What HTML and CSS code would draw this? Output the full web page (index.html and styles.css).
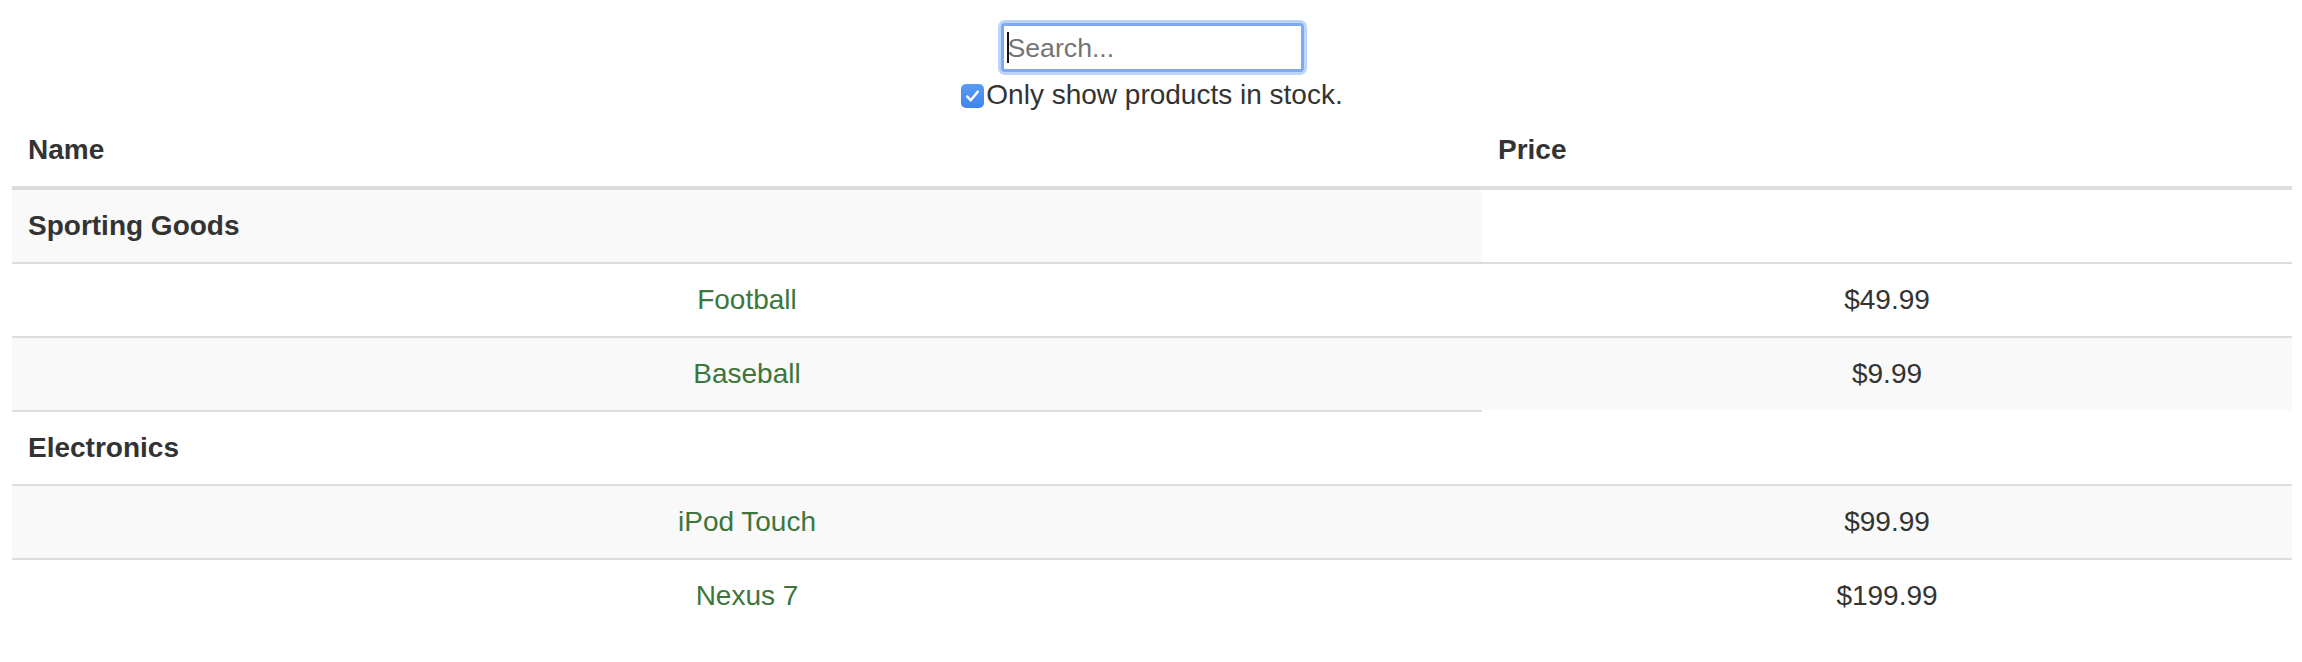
FILE: index.html
```html
<!DOCTYPE html>
<html>
<head>
<meta charset="utf-8">
<link rel="stylesheet" href="styles.css">
</head>
<body>
<div class="page">
  <form class="search-bar">
    <div class="search-row">
      <span class="search-wrap">
        <input class="search-input" type="text" placeholder="Search...">
        <span class="caret"></span>
      </span>
    </div>
    <div class="stock-row">
      <label class="stock-label">
        <span class="checkbox">
          <svg viewBox="0 0 24 24" width="23" height="24"><path d="M6.5 12.5 L10.2 16.5 L17.5 7.5" fill="none" stroke="#fff" stroke-width="2.6" stroke-linecap="round" stroke-linejoin="round"/></svg>
        </span>Only show products in stock.
      </label>
    </div>
  </form>
  <table class="product-table">
    <colgroup>
      <col class="col-name">
      <col class="col-price">
    </colgroup>
    <thead>
      <tr><th>Name</th><th>Price</th></tr>
    </thead>
    <tbody>
      <tr class="odd first"><th class="cat">Sporting Goods</th></tr>
      <tr><td class="name">Football</td><td class="price">$49.99</td></tr>
      <tr class="odd"><td class="name">Baseball</td><td class="price">$9.99</td></tr>
      <tr><th class="cat">Electronics</th></tr>
      <tr class="odd"><td class="name">iPod Touch</td><td class="price">$99.99</td></tr>
      <tr><td class="name">Nexus 7</td><td class="price">$199.99</td></tr>
    </tbody>
  </table>
</div>
</body>
</html>
```

FILE: styles.css
```css
html, body {
  margin: 0;
  padding: 0;
  background: #fff;
}
body {
  font-family: "Liberation Sans", Arial, sans-serif;
  font-size: 28px;
  line-height: 40px;
  color: #333;
}
.page {
  padding: 0 10px 0 12px;
}
.search-bar {
  margin: 0;
  padding-top: 23px;
  text-align: center;
}
.search-row {
  height: 49px;
  line-height: 0;
}
.search-wrap {
  position: relative;
  display: inline-block;
}
.search-input {
  box-sizing: border-box;
  width: 303px;
  height: 49px;
  margin: 0;
  padding: 2px 4px 0;
  border: 3px solid #7faaf2;
  border-radius: 4px;
  box-shadow: 0 0 0 3px #bcd4f9;
  outline: none;
  background: #fff;
  font-family: "Liberation Sans", Arial, sans-serif;
  font-size: 26.67px;
  color: #333;
}
.search-input::placeholder {
  color: #757575;
}
.caret {
  position: absolute;
  left: 6px;
  top: 9px;
  width: 2px;
  height: 31px;
  background: #111;
}
.stock-row {
  margin-top: 3px;
  height: 39px;
}
.stock-label {
  display: inline-flex;
  align-items: center;
  gap: 2px;
  height: 40px;
}
.checkbox {
  display: inline-flex;
  width: 23px;
  height: 24px;
  border-radius: 5px;
  background: linear-gradient(#5a9bf5, #3f84ee);
  margin-top: 2px;
}
.checkbox svg {
  display: block;
}
.product-table {
  width: 2280px;
  table-layout: fixed;
  border-collapse: separate;
  border-spacing: 0;
}
.col-name {
  width: 64.474%;
}
.col-price {
  width: 35.526%;
}
.product-table th,
.product-table td {
  padding: 16px;
  line-height: 40px;
  vertical-align: top;
  border-top: 2px solid #ddd;
}
.product-table thead th {
  text-align: left;
  font-weight: bold;
  border-top: 0;
  border-bottom: 4px solid #ddd;
}
.product-table tbody tr.first > * {
  border-top: 0;
}
.product-table tbody tr.odd > * {
  background: #f9f9f9;
}
.cat {
  text-align: left;
  font-weight: bold;
}
.name {
  text-align: center;
  color: #3c763d;
}
.price {
  text-align: center;
  color: #333;
}
```
